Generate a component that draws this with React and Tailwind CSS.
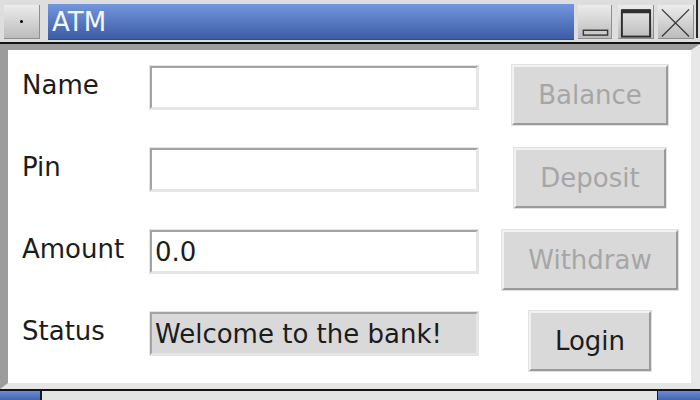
import React from 'react';

const font = "font-['DejaVu_Sans','Liberation_Sans',sans-serif]";

const Field = ({ value, readOnly }) => (
  <div className="border border-[#e4e4e4]">
    <div
      className={`w-[328px] h-[43px] border-2 border-t-[#a3a3a3] border-l-[#a3a3a3] border-b-[#e6e6e6] border-r-[#e6e6e6] px-[3px] flex items-center text-[26px] leading-[30px] text-[#1c1c1c] ${
        readOnly ? 'bg-[#d9d9d9]' : 'bg-white'
      }`}
    >
      {value}
    </div>
  </div>
);

const TkButton = ({ label, disabled, offset }) => (
  <div className={`border border-[#e2e2e2] ${offset}`}>
    <button
      className={`border-2 border-t-[#f2f2f2] border-l-[#f2f2f2] border-b-[#9a9a9a] border-r-[#9a9a9a] bg-[#d9d9d9] px-[24px] py-[13px] text-[26px] leading-[30px] ${
        disabled ? 'text-[#a6a6a6]' : 'text-[#1c1c1c]'
      }`}
    >
      {label}
    </button>
  </div>
);

const Row = ({ label, value, readOnly, button, disabled, offset, last }) => (
  <div className={`${last ? '' : 'h-[82px]'} flex items-start`}>
    <div className="w-[127px] mt-[5px] text-[26px] leading-[30px] text-[#1c1c1c]">{label}</div>
    <Field value={value} readOnly={readOnly} />
    <div className="w-[196px] ml-[13px] flex justify-center">
      <TkButton label={button} disabled={disabled} offset={offset} />
    </div>
  </div>
);

const WmButton = ({ children, w }) => (
  <div
    className={`${w} h-[34px] mt-[1px] bg-gradient-to-b from-[#ececec] to-[#bcbcbc] border-r border-b border-[#8e8e8e] flex items-center justify-center`}
  >
    {children}
  </div>
);

export default function App() {
  return (
    <div className={`w-[700px] h-[400px] bg-[#dedede] flex flex-col overflow-hidden ${font}`}>
      {/* title bar */}
      <div className="h-[42px] shrink-0 flex items-start pt-[4px] pl-[4px]">
        <WmButton w="w-[36px]">
          <div className="w-[3px] h-[3px] bg-black rounded-full" />
        </WmButton>
        <div className="ml-[8px] w-[526px] h-[36px] bg-gradient-to-b from-[#7396df] to-[#3d5da6] border-b border-[#2f4c8e] flex items-center pl-[4px] text-[26px] leading-[30px] text-[#f4f7ff]">
          ATM
        </div>
        <div className="ml-[4px]">
          <WmButton w="w-[34px]">
            <svg width="34" height="34" viewBox="0 0 34 34">
              <rect x="5.5" y="25.5" width="25" height="5" fill="#c8ccc8" stroke="#3a3a3a" strokeWidth="1.5" />
            </svg>
          </WmButton>
        </div>
        <div className="ml-[6px]">
          <WmButton w="w-[36px]">
            <svg width="36" height="34" viewBox="0 0 36 34">
              <rect x="4" y="5" width="29" height="27" fill="none" stroke="#2e2e2e" strokeWidth="2" />
              <rect x="4" y="4" width="29" height="4" fill="#2e2e2e" />
            </svg>
          </WmButton>
        </div>
        <div className="ml-[4px]">
          <WmButton w="w-[36px]">
            <svg width="36" height="34" viewBox="0 0 36 34">
              <path d="M4 4 L32 32 M32 4 L4 32" stroke="#3a3a3a" strokeWidth="1.4" />
            </svg>
          </WmButton>
        </div>
        <div className="ml-auto mr-[2px] w-[2px] h-[38px] -mt-[4px] bg-[#2a2a2a]" />
      </div>
      <div className="h-[2px] shrink-0 bg-[#141414]" />

      {/* client area */}
      <div className="flex-1 min-h-0 overflow-hidden flex flex-col border-t-[6px] border-l-[8px] border-t-[#9c9c9c] border-l-[#9c9c9c] border-b-[6px] border-r-[9px] border-b-[#e6e6e6] border-r-[#e8e8e8] bg-white">
        <div className="pt-[15px] pl-[14px] flex flex-col">
          <Row label="Name" value="" button="Balance" disabled offset="-mt-px" />
          <Row label="Pin" value="" button="Deposit" disabled />
          <Row label="Amount" value="0.0" button="Withdraw" disabled />
          <Row label="Status" value="Welcome to the bank!" readOnly button="Login" offset="-mt-px" last />
        </div>
      </div>
      <div className="h-[2px] shrink-0 bg-[#141414]" />

      {/* strip below */}
      <div className="h-[9px] shrink-0 flex">
        <div className="w-[40px] bg-gradient-to-b from-[#6a8cd8] to-[#4464ad]" />
        <div className="w-[2px] bg-[#1a1a1a]" />
        <div className="flex-1 bg-[#e2e6e2]" />
        <div className="w-[1px] bg-[#1a1a1a]" />
        <div className="w-[42px] bg-gradient-to-b from-[#6a8cd8] to-[#4464ad]" />
      </div>
    </div>
  );
}
